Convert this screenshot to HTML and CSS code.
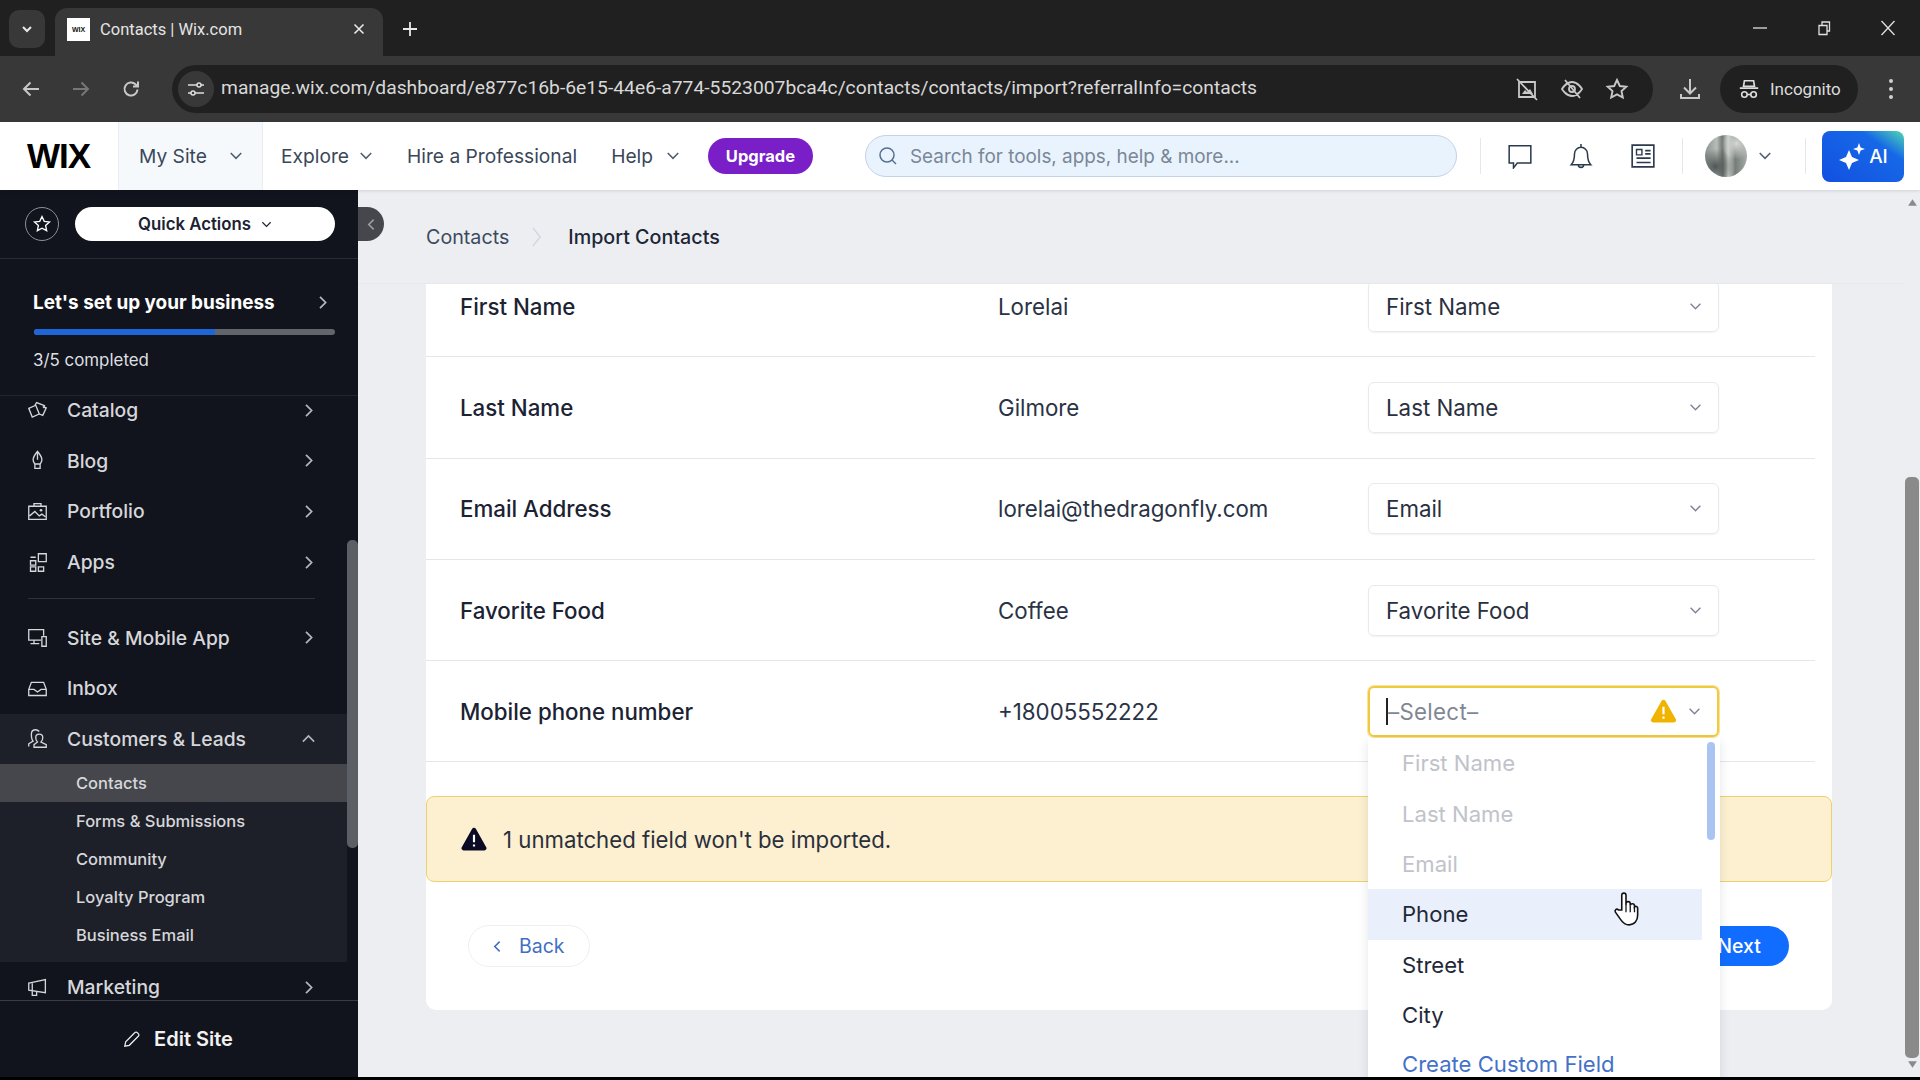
FILE: index.html
```html
<!DOCTYPE html>
<html>
<head>
  <title>Contacts | Wix.com</title>
  <link rel="stylesheet" href="styles.css">
</head>
<body>
  <svg class="defs" width="0" height="0">
    <symbol id="chev-down" viewBox="0 0 12 12"><path d="M1.5 3.5 6 8l4.500-4.500" fill="none" stroke="currentColor" stroke-width="1.300"/></symbol>
    <symbol id="chev-right" viewBox="0 0 12 12"><path d="M4 1.500 8.500 6 4 10.500" fill="none" stroke="currentColor" stroke-width="1.400"/></symbol>
    <symbol id="warn" viewBox="0 0 24 22"><path d="M10.300 1.600a2 2 0 0 1 3.400 0l9.600 16.900a2 2 0 0 1-1.700 3H2.400a2 2 0 0 1-1.700-3z" fill="currentColor"/><path d="M11 7h2v7h-2zM11 16h2v2h-2z" fill="#fff"/></symbol>
  </svg>

  <div class="app">
    <!-- browser chrome -->
    <div class="tabstrip">
      <div class="tab-search"><svg class="ic12" viewBox="0 0 12 12"><path d="M2 4l4 4 4-4" fill="none" stroke="#e8e8e8" stroke-width="2"/></svg></div>
      <div class="tab">
        <span class="favicon">WIX</span>
        <span class="tab-title">Contacts | Wix.com</span>
        <svg class="tab-close" viewBox="0 0 12 12"><path d="M1.500 1.500l9 9M10.500 1.500l-9 9" stroke="#e8e8e8" stroke-width="1.600"/></svg>
      </div>
      <svg class="tab-new" viewBox="0 0 14 14"><path d="M7 0v14M0 7h14" stroke="#e8e8e8" stroke-width="1.800"/></svg>
      <div class="win-controls">
        <svg viewBox="0 0 16 16"><path d="M1 8h14" stroke="#e0e0e0" stroke-width="1.300"/></svg>
        <svg viewBox="0 0 16 16"><path d="M3 5.500h8v9H3zM6 5V2h7.500v9H11" fill="none" stroke="#e0e0e0" stroke-width="1.300"/></svg>
        <svg viewBox="0 0 16 16"><path d="M1.500 1l13 14M14.500 1l-13 14" stroke="#e0e0e0" stroke-width="1.300"/></svg>
      </div>
    </div>

    <div class="toolbar">
      <svg class="nav-ic" viewBox="0 0 20 20"><path d="M18 10H3M9.500 3.500 3 10l6.500 6.500" fill="none" stroke="#c8c8c8" stroke-width="2"/></svg>
      <svg class="nav-ic dim" viewBox="0 0 20 20"><path d="M2 10h15M10.500 3.500 17 10l-6.500 6.500" fill="none" stroke="#777" stroke-width="2"/></svg>
      <svg class="nav-ic" viewBox="0 0 20 20"><path d="M16.500 10.500a6.500 6.500 0 1 1-2-5.200L17 7.500M17 2.500v5h-5" fill="none" stroke="#c8c8c8" stroke-width="2"/></svg>
      <div class="omnibox">
        <div class="site-info"><svg viewBox="0 0 20 20"><path d="M2 6h9M15 6h3M2 14h3M9 14h9" stroke="#ddd" stroke-width="1.600"/><circle cx="13" cy="6" r="2" fill="none" stroke="#ddd" stroke-width="1.500"/><circle cx="7" cy="14" r="2" fill="none" stroke="#ddd" stroke-width="1.500"/></svg></div>
        <span class="url">manage.wix.com/dashboard/e877c16b-6e15-44e6-a774-5523007bca4c/contacts/contacts/import?referralInfo=contacts</span>
        <svg class="omni-ic" viewBox="0 0 24 24"><path d="M4 5h16v15H4zM2 2l20 21" fill="none" stroke="#c8c8c8" stroke-width="1.800"/><path d="M7 17l3-4 2 2 3-3 3 5z" fill="#c8c8c8"/></svg>
        <svg class="omni-ic" viewBox="0 0 24 24"><path d="M2 12s4-7 10-7 10 7 10 7-4 7-10 7-10-7-10-7zM5 3l15 18" fill="none" stroke="#c8c8c8" stroke-width="1.800"/><circle cx="12" cy="12" r="3" fill="none" stroke="#c8c8c8" stroke-width="1.800"/></svg>
        <svg class="omni-ic" viewBox="0 0 24 24"><path d="M12 3l2.800 6 6.500.7-4.800 4.400 1.300 6.400L12 17.300 6.200 20.500l1.300-6.400L2.700 9.700 9.200 9z" fill="none" stroke="#c8c8c8" stroke-width="1.900"/></svg>
      </div>
      <svg class="download" viewBox="0 0 24 24"><path d="M12 2v14M6 10.500l6 6 6-6M3 17v4h18v-4" fill="none" stroke="#c8c8c8" stroke-width="2"/></svg>
      <div class="incognito">
        <svg viewBox="0 0 24 24"><path d="M7 3h10l1 6H6zM2 11h20" fill="none" stroke="#ddd" stroke-width="1.800"/><circle cx="7" cy="18" r="3" fill="none" stroke="#ddd" stroke-width="1.800"/><circle cx="17" cy="18" r="3" fill="none" stroke="#ddd" stroke-width="1.800"/><path d="M10 18h4" stroke="#ddd" stroke-width="1.800"/></svg>
        <span>Incognito</span>
      </div>
      <div class="menu-dots"><i></i><i></i><i></i></div>
    </div>

    <!-- wix top bar -->
    <div class="topbar">
      <div class="logo">WIX</div>
      <div class="site-switch">My Site <svg class="chev-sm"><use href="#chev-down"/></svg></div>
      <nav class="topnav">
        <span class="nav-item explore">Explore <svg class="chev-sm"><use href="#chev-down"/></svg></span>
        <span class="nav-item hire">Hire a Professional</span>
        <span class="nav-item help">Help <svg class="chev-sm"><use href="#chev-down"/></svg></span>
      </nav>
      <button class="upgrade">Upgrade</button>
      <div class="search">
        <svg viewBox="0 0 20 20"><circle cx="9" cy="9" r="7" fill="none" stroke="#56708f" stroke-width="1.500"/><path d="M14 14l4 4" stroke="#56708f" stroke-width="1.500"/></svg>
        <span>Search for tools, apps, help &amp; more...</span>
      </div>
      <div class="top-icons">
        <svg viewBox="0 0 24 24"><path d="M2 2.500h20v16H9.500L6 23v-4.500H2z" fill="none" stroke="#2b3a4d" stroke-width="1.400"/></svg>
        <svg viewBox="0 0 24 24"><path d="M12 1v2.500M6 10a6 6 0 0 1 12 0c0 6 1 8 3 10H3c2-2 3-4 3-10zM9.500 20a2.500 2.500 0 0 0 5 0" fill="none" stroke="#2b3a4d" stroke-width="1.400"/></svg>
        <svg viewBox="0 0 24 24"><path d="M2 2h20v20H2z" fill="none" stroke="#2b3a4d" stroke-width="1.500"/><path d="M6 6h5v5H6z" fill="none" stroke="#2b3a4d" stroke-width="1.300"/><path d="M14 7h5M14 10h5M6 14h13M6 18h13" stroke="#2b3a4d" stroke-width="1.500"/></svg>
      </div>
      <div class="account">
        <div class="avatar"></div>
        <svg class="chev-sm"><use href="#chev-down"/></svg>
      </div>
      <button class="ai-btn">
        <svg viewBox="0 0 28 28"><path d="M11 8l3 7 7 3-7 3-3 7-3-7-7-3 7-3z" fill="#fff"/><path d="M21 1l1.600 4.400L27 7l-4.400 1.600L21 13l-1.600-4.400L15 7l4.400-1.600z" fill="#fff"/></svg>
        <span>AI</span>
      </button>
    </div>

    <div class="main">
      <!-- sidebar -->
      <aside class="sidebar">
        <div class="side-top">
          <div class="star-btn"><svg viewBox="0 0 24 24"><path d="M12 3l2.700 5.800 6.300.7-4.700 4.300 1.300 6.200L12 17l-5.600 3 1.300-6.200L3 9.500l6.300-.7z" fill="none" stroke="#fff" stroke-width="1.600"/></svg></div>
          <button class="quick">Quick Actions <svg class="chev-xs"><use href="#chev-down"/></svg></button>
        </div>
        <div class="setup">
          <div class="setup-title"><span>Let's set up your business</span><svg class="chev-r"><use href="#chev-right"/></svg></div>
          <div class="progress"><div class="progress-fill" style="width: 60%"></div></div>
          <div class="setup-count">3/5 completed</div>
        </div>
        <div class="side-menu">
          <div class="menu-item first">
            <svg class="menu-ic" viewBox="0 0 24 24"><path d="M2 9.500 10 6l4 10-8 3.500z" fill="none" stroke="currentColor" stroke-width="1.500"/><path d="M9 6 11 3l9 3.500-1 3M14 16l4 1.500 4-8.500-4-1.500" fill="none" stroke="currentColor" stroke-width="1.500"/></svg>
            <span>Catalog</span><svg class="chev-r"><use href="#chev-right"/></svg>
          </div>
          <div class="menu-item">
            <svg class="menu-ic" viewBox="0 0 24 24"><path d="M12 1.500c-3 4-5 6-5 9.500 0 2.500 1.500 4 2 5h6c.5-1 2-2.500 2-5 0-3.500-2-5.500-5-9.500zM12 2v9M9 16h6v5H9z" fill="none" stroke="currentColor" stroke-width="1.500"/></svg>
            <span>Blog</span><svg class="chev-r"><use href="#chev-right"/></svg>
          </div>
          <div class="menu-item">
            <svg class="menu-ic" viewBox="0 0 24 24"><path d="M2 6h20v15H2zM8 6V3h8v3M3 17l6-5 5 5 3-2 4 3" fill="none" stroke="currentColor" stroke-width="1.500"/><circle cx="16" cy="10.500" r="1.500" fill="currentColor"/></svg>
            <span>Portfolio</span><svg class="chev-r"><use href="#chev-right"/></svg>
          </div>
          <div class="menu-item">
            <svg class="menu-ic" viewBox="0 0 24 24"><path d="M4 10h6v5H4zM4 17h6v5H4zM13 17h6v5h-6zM13 2h9v9h-9zM4 6h6" fill="none" stroke="currentColor" stroke-width="1.500"/></svg>
            <span>Apps</span><svg class="chev-r"><use href="#chev-right"/></svg>
          </div>
          <div class="menu-divider"></div>
          <div class="menu-item">
            <svg class="menu-ic" viewBox="0 0 24 24"><path d="M16 15H2V3h17v7M8 15v4M4 19h10M17 11h5v11h-5z" fill="none" stroke="currentColor" stroke-width="1.500"/></svg>
            <span>Site &amp; Mobile App</span><svg class="chev-r"><use href="#chev-right"/></svg>
          </div>
          <div class="menu-item">
            <svg class="menu-ic" viewBox="0 0 24 24"><path d="M2 13l3-8h14l3 8v7H2zM2 13h6l4 3 4-3h6" fill="none" stroke="currentColor" stroke-width="1.500"/></svg>
            <span>Inbox</span>
          </div>
          <div class="menu-group">
            <div class="menu-item">
              <svg class="menu-ic" viewBox="0 0 24 24"><path d="M2 21v-3l5-3c-2-2-2-5-2-8 0-3 2-5 5-5 2 0 3 1 4 2M22 22H8v-3l4-3c-1.500-1.500-2-3-2-5 0-2 1.500-4 4-4s4 2 4 4c0 2-.5 3.500-2 5l6 3z" fill="none" stroke="currentColor" stroke-width="1.500"/></svg>
              <span>Customers &amp; Leads</span><svg class="chev-r up"><use href="#chev-down"/></svg>
            </div>
            <div class="sub-item selected">Contacts</div>
            <div class="sub-item">Forms &amp; Submissions</div>
            <div class="sub-item">Community</div>
            <div class="sub-item">Loyalty Program</div>
            <div class="sub-item">Business Email</div>
          </div>
          <div class="menu-item">
            <svg class="menu-ic" viewBox="0 0 24 24"><path d="M2 7l19-4v15L2 15zM6 15.500V21h5v-4" fill="none" stroke="currentColor" stroke-width="1.500"/><path d="M6 7v8" stroke="currentColor" stroke-width="1.500"/></svg>
            <span>Marketing</span><svg class="chev-r"><use href="#chev-right"/></svg>
          </div>
        </div>
        <div class="side-foot">
          <svg viewBox="0 0 20 20"><path d="M2 18l1-5L13 3a2 2 0 0 1 3 0l1 1a2 2 0 0 1 0 3L7 17z" fill="none" stroke="#eee" stroke-width="1.400"/></svg>
          <span>Edit Site</span>
        </div>
        <div class="side-thumb"></div>
        <div class="collapse"><svg class="chev-l" viewBox="0 0 12 12"><path d="M8 1.500 3.500 6 8 10.500" fill="none" stroke="#9b9da3" stroke-width="1.500"/></svg></div>
      </aside>

      <!-- page -->
      <section class="content">
        <div class="page">
          <div class="crumbs">
            <span>Contacts</span>
            <svg viewBox="0 0 12 24"><path d="M2 2l8 10-8 10" fill="none" stroke="#d2d5dc" stroke-width="1.500"/></svg>
            <span class="crumb-now">Import Contacts</span>
          </div>
          <div class="page-body">
            <div class="card">
              <div class="rows">
                <div class="row">
                  <span class="row-label">First Name</span><span class="row-value">Lorelai</span>
                  <div class="select">First Name <svg class="chev-sel"><use href="#chev-down"/></svg></div>
                </div>
                <div class="row">
                  <span class="row-label">Last Name</span><span class="row-value">Gilmore</span>
                  <div class="select">Last Name <svg class="chev-sel"><use href="#chev-down"/></svg></div>
                </div>
                <div class="row">
                  <span class="row-label">Email Address</span><span class="row-value">lorelai@thedragonfly.com</span>
                  <div class="select">Email <svg class="chev-sel"><use href="#chev-down"/></svg></div>
                </div>
                <div class="row">
                  <span class="row-label">Favorite Food</span><span class="row-value">Coffee</span>
                  <div class="select">Favorite Food <svg class="chev-sel"><use href="#chev-down"/></svg></div>
                </div>
                <div class="row">
                  <span class="row-label">Mobile phone number</span><span class="row-value">+18005552222</span>
                  <div class="select warning">
                    <span class="caret"></span><span class="placeholder">–Select–</span>
                    <svg class="warn-ic"><use href="#warn"/></svg>
                    <svg class="chev-sel"><use href="#chev-down"/></svg>
                  </div>
                </div>
              </div>
              <div class="banner">
                <svg class="banner-ic"><use href="#warn"/></svg>
                <span>1 unmatched field won't be imported.</span>
              </div>
              <div class="card-foot">
                <button class="btn-back"><svg class="chev-l" viewBox="0 0 12 12"><path d="M8 1.500 3.500 6 8 10.500" fill="none" stroke="#3f6fc4" stroke-width="1.400"/></svg>Back</button>
                <button class="btn-next">Next</button>
              </div>
            </div>
          </div>

          <div class="dropdown">
            <div class="opt disabled">First Name</div>
            <div class="opt disabled">Last Name</div>
            <div class="opt disabled">Email</div>
            <div class="opt hover">Phone</div>
            <div class="opt">Street</div>
            <div class="opt">City</div>
            <div class="opt link">Create Custom Field</div>
            <div class="dd-thumb"></div>
          </div>
          <svg class="hand" viewBox="0 0 24 34"><path d="M8 18V4a2 2 0 0 1 4 0v10-2a2 2 0 0 1 4 0v2a2 2 0 0 1 4 0v1a1.800 1.800 0 0 1 3 1v7c0 5-3 9-8 9-4 0-6-2-8-5l-5-7c-1-2 1-4 3-2z" fill="#fff" stroke="#111" stroke-width="1.500"/><path d="M12 14v6M16 14v6M20 15v5" stroke="#111" stroke-width="1.200"/></svg>
        </div>
        <div class="page-scroll">
          <svg viewBox="0 0 10 8"><path d="M5 1l4 6H1z" fill="#8a8a8a"/></svg>
          <div class="page-track"><div class="page-thumb"></div></div>
          <svg viewBox="0 0 10 8"><path d="M5 7 1 1h8z" fill="#8a8a8a"/></svg>
        </div>
      </section>
    </div>
  </div>
</body>
</html>
```

FILE: styles.css
```css
/* page frame */
html, body {
  margin: 0;
  height: 100%;
  background-color: #000;
  overflow: hidden;
}

body {
  font-family: "Inter", "Liberation Sans", sans-serif;
  color: #162032;
}

.defs {
  position: absolute;
}

.app {
  width: 1920px;
  height: 1077px;
  display: flex;
  flex-direction: column;
  overflow: hidden;
}

button {
  font-family: inherit;
  border: none;
}

.chev-sm {
  width: 14px;
  height: 14px;
  color: #4f5d72;
  flex-shrink: 0;
}

.chev-xs {
  width: 11px;
  height: 11px;
  margin-left: 10px;
}

.chev-sel {
  width: 13px;
  height: 13px;
  color: #7d8494;
  flex-shrink: 0;
}

/* browser tabs */
.tabstrip {
  height: 56px;
  flex-shrink: 0;
  background-color: #202020;
  display: flex;
  align-items: flex-end;
  font-family: "Roboto", sans-serif;
  color: #e4e4e4;
}

.tab-search {
  width: 36px;
  height: 38px;
  margin: 0 10px 8px 9px;
  border-radius: 10px;
  background-color: #383838;
  display: flex;
  align-items: center;
  justify-content: center;
}

.ic12 {
  width: 12px;
  height: 12px;
}

.tab {
  width: 328px;
  height: 48px;
  box-sizing: border-box;
  padding: 0 18px 6px 12px;
  background-color: #383838;
  border-radius: 12px 12px 0 0;
  display: flex;
  align-items: center;
}

.favicon {
  width: 23px;
  height: 23px;
  background-color: #fff;
  color: #111;
  font: bold 7px "Liberation Sans", sans-serif;
  display: flex;
  align-items: center;
  justify-content: center;
  margin-right: 10px;
}

.tab-title {
  flex: 1;
  font-size: 16.500px;
}

.tab-close {
  width: 12px;
  height: 12px;
}

.tab-new {
  width: 14px;
  height: 14px;
  margin: 0 0 20px 20px;
}

.win-controls {
  margin-left: auto;
  padding-right: 24px;
  height: 56px;
  display: flex;
  align-items: center;
  gap: 48px;
}

.win-controls svg {
  width: 16px;
  height: 16px;
}

/* browser toolbar */
.toolbar {
  height: 66px;
  flex-shrink: 0;
  box-sizing: border-box;
  padding: 0 0 0 21px;
  background-color: #383838;
  display: flex;
  align-items: center;
  font-family: "Roboto", sans-serif;
}

.nav-ic {
  width: 20px;
  height: 20px;
  margin-right: 30px;
}

.omnibox {
  width: 1481px;
  height: 48px;
  margin-left: 1px;
  box-sizing: border-box;
  border-radius: 24px;
  background-color: #202020;
  display: flex;
  align-items: center;
  padding: 0 24px 0 6px;
}

.site-info {
  width: 36px;
  height: 36px;
  border-radius: 50%;
  background-color: #383838;
  display: flex;
  align-items: center;
  justify-content: center;
  margin-right: 7px;
}

.site-info svg {
  width: 20px;
  height: 20px;
}

.url {
  flex: 1;
  font-size: 19.270px;
  line-height: 24px;
  margin-top: -2px;
  color: #d8d8d8;
  white-space: nowrap;
}

.omni-ic {
  width: 24px;
  height: 24px;
  margin-left: 21px;
}

.download {
  width: 24px;
  height: 24px;
  margin-left: 25px;
}

.incognito {
  width: 138px;
  height: 48px;
  margin-left: 18px;
  box-sizing: border-box;
  padding-left: 18px;
  border-radius: 24px;
  background-color: #202020;
  display: flex;
  align-items: center;
  gap: 10px;
  font-size: 17px;
  color: #dcdcdc;
}

.incognito svg {
  width: 22px;
  height: 22px;
}

.menu-dots {
  margin-left: 31px;
  display: flex;
  flex-direction: column;
  gap: 4px;
}

.menu-dots i {
  width: 4px;
  height: 4px;
  border-radius: 50%;
  background-color: #d0d0d0;
}

/* wix top bar */
.topbar {
  height: 68px;
  flex-shrink: 0;
  background-color: #fff;
  display: flex;
  align-items: center;
  font-size: 19.200px;
  color: #3a4759;
  box-shadow: 0 1px 3px rgba(0, 0, 0, 0.12);
  position: relative;
  z-index: 3;
}

.logo {
  width: 118px;
  box-sizing: border-box;
  padding-left: 27px;
  font: bold 35px "Liberation Sans", sans-serif;
  letter-spacing: -1px;
  color: #000;
}

.site-switch {
  width: 145px;
  height: 68px;
  box-sizing: border-box;
  padding: 0 19px 0 20px;
  background-color: #f6f9fc;
  border-left: 1px solid #e8edf3;
  border-right: 1px solid #e8edf3;
  display: flex;
  align-items: center;
  justify-content: space-between;
}

.topnav {
  display: flex;
  align-items: center;
}

.nav-item {
  display: flex;
  align-items: center;
  gap: 10px;
}

.explore {
  margin-left: 18px;
}

.hire {
  margin-left: 34px;
}

.help {
  margin-left: 34px;
  gap: 13px;
}

.upgrade {
  width: 105px;
  height: 36px;
  margin-left: 28px;
  border-radius: 18px;
  background-color: #7a1ec8;
  color: #fff;
  font-size: 16.500px;
  font-weight: 700;
}

.search {
  width: 592px;
  height: 42px;
  margin-left: 52px;
  box-sizing: border-box;
  padding-left: 12px;
  border: 1px solid #c5d3e6;
  border-radius: 21px;
  background-color: #e8f3fd;
  color: #7a8797;
  font-size: 18.900px;
  display: flex;
  align-items: center;
  gap: 12px;
}

.search svg {
  width: 20px;
  height: 20px;
}

.top-icons {
  width: 203px;
  height: 36px;
  margin-left: 23px;
  box-sizing: border-box;
  padding: 0 26px;
  border-left: 1px solid #e4e7ec;
  border-right: 1px solid #e4e7ec;
  display: flex;
  align-items: center;
  justify-content: space-between;
}

.top-icons svg {
  width: 26px;
  height: 26px;
}

.account {
  width: 123px;
  height: 36px;
  box-sizing: border-box;
  padding-left: 22px;
  border-right: 1px solid #e4e7ec;
  display: flex;
  align-items: center;
  gap: 11px;
}

.avatar {
  width: 42px;
  height: 42px;
  flex-shrink: 0;
  border-radius: 50%;
  background:
    radial-gradient(circle at 25% 75%, #4e5654 0, transparent 40%),
    radial-gradient(circle at 75% 20%, #d5d8d4 0, transparent 35%),
    linear-gradient(90deg, #8b938f 0%, #b7bdb8 28%, #6c726d 42%, #c9cdc8 55%, #767d79 72%, #a7ada9 100%);
}

.ai-btn {
  width: 82px;
  height: 51px;
  margin-left: 16px;
  border-radius: 8px;
  background: linear-gradient(215deg, #4fd8b0 0%, #1668e8 28%, #1250e0 100%);
  color: #fff;
  font-size: 19px;
  font-weight: 500;
  display: flex;
  align-items: center;
  justify-content: center;
  gap: 3px;
  padding: 0;
}

.ai-btn svg {
  width: 28px;
  height: 28px;
}

/* main area */
.main {
  flex: 1;
  display: flex;
  min-height: 0;
}

/* sidebar */
.sidebar {
  width: 358px;
  flex-shrink: 0;
  background-color: #12141d;
  color: #d6d7db;
  display: flex;
  flex-direction: column;
  position: relative;
}

.side-top {
  height: 69px;
  flex-shrink: 0;
  box-sizing: border-box;
  padding: 17px 23px 0 25px;
  border-bottom: 1px solid #2a2c35;
  display: flex;
  align-items: flex-start;
  gap: 16px;
}

.star-btn {
  width: 34px;
  height: 34px;
  box-sizing: border-box;
  border: 1px solid #8d8f96;
  border-radius: 50%;
  display: flex;
  align-items: center;
  justify-content: center;
}

.star-btn svg {
  width: 20px;
  height: 20px;
}

.quick {
  flex: 1;
  height: 34px;
  border-radius: 17px;
  background-color: #fff;
  color: #1a2233;
  font-size: 16.800px;
  font-weight: 600;
  display: flex;
  align-items: center;
  justify-content: center;
}

.setup {
  height: 137px;
  flex-shrink: 0;
  box-sizing: border-box;
  padding: 30px 28px 0 33px;
  border-bottom: 1px solid #23252e;
}

.setup-title {
  display: flex;
  align-items: center;
  justify-content: space-between;
  font-size: 18.900px;
  font-weight: 700;
  color: #fff;
  height: 26px;
}

.chev-r {
  width: 15px;
  height: 15px;
  color: #b5b6ba;
  flex-shrink: 0;
}

.progress {
  height: 6px;
  margin: 14px -5px 0 1px;
  border-radius: 3px;
  background-color: #63656c;
  overflow: hidden;
}

.progress-fill {
  height: 100%;
  background-color: #1e66d8;
}

.setup-count {
  margin-top: 15px;
  font-size: 16.900px;
  color: #dfdfe1;
}

.side-menu {
  flex: 1;
  min-height: 0;
  margin-right: 11px;
  overflow: hidden;
}

.menu-item {
  height: 50.600px;
  box-sizing: border-box;
  padding: 0 31px 0 27px;
  display: flex;
  align-items: center;
  font-size: 19.300px;
  font-weight: 500;
}

.menu-item.first {
  margin-top: -11px;
}

.menu-item span {
  flex: 1;
}

.menu-ic {
  width: 21px;
  height: 21px;
  margin-right: 19px;
  flex-shrink: 0;
}

.up {
  transform: rotate(180deg);
}

.menu-divider {
  height: 1px;
  margin: 11px 32px 13px 28px;
  background-color: #2f313a;
}

.menu-group {
  background-color: #1e2029;
  padding-bottom: 8px;
}

.sub-item {
  height: 38px;
  box-sizing: border-box;
  padding-left: 76px;
  display: flex;
  align-items: center;
  font-size: 16.500px;
  font-weight: 500;
}

.sub-item.selected {
  background-color: #45474d;
}

.side-foot {
  height: 77px;
  flex-shrink: 0;
  box-sizing: border-box;
  border-top: 1px solid #3a3c45;
  background-color: #12141d;
  display: flex;
  align-items: center;
  justify-content: center;
  gap: 13px;
  padding-right: 2px;
  font-size: 20px;
  font-weight: 600;
  color: #f2f2f3;
  position: relative;
}

.side-foot svg {
  width: 18px;
  height: 18px;
}

.side-thumb {
  position: absolute;
  left: 347px;
  top: 350px;
  width: 11px;
  height: 308px;
  border-radius: 5px;
  background-color: #5d5f66;
}

.collapse {
  position: absolute;
  left: 358px;
  top: 17px;
  width: 26px;
  height: 34px;
  border-radius: 0 17px 17px 0;
  background-color: #45474d;
  display: flex;
  align-items: center;
  justify-content: center;
}

.chev-l {
  width: 13px;
  height: 13px;
}

/* content */
.content {
  flex: 1;
  min-width: 0;
  display: flex;
  background-color: #eceef2;
}

.page {
  flex: 1;
  min-width: 0;
  display: flex;
  flex-direction: column;
  position: relative;
}

.crumbs {
  height: 94px;
  flex-shrink: 0;
  box-sizing: border-box;
  padding: 0 0 0 68px;
  border-bottom: 1px solid #e6e8ec;
  display: flex;
  align-items: center;
  gap: 22px;
  font-size: 19.700px;
  color: #3c4a5e;
}

.crumbs svg {
  width: 11px;
  height: 24px;
}

.crumb-now {
  margin-left: 4px;
  color: #1c2636;
  font-weight: 500;
}

.page-body {
  flex: 1;
  min-height: 0;
  padding: 0 72px 0 68px;
}

.card {
  height: 726px;
  background-color: #fff;
  border-radius: 0 0 10px 10px;
  overflow: hidden;
}

.rows {
  margin: -28px 17px 0 0;
}

.row {
  height: 101.300px;
  box-sizing: border-box;
  padding-left: 34px;
  border-bottom: 1px solid #e4e6ea;
  display: grid;
  grid-template-columns: 538px 370px 351px;
  align-items: center;
  font-size: 22.300px;
}

.row-label {
  font-weight: 500;
  color: #1b2233;
}

.row-value {
  color: #2a3345;
}

.select {
  height: 51px;
  box-sizing: border-box;
  padding: 0 16px 0 17px;
  border: 1px solid #e6e9ee;
  border-radius: 6px;
  box-shadow: 0 1px 2px rgba(22, 45, 61, 0.06);
  display: flex;
  align-items: center;
  justify-content: space-between;
  color: #2a3040;
}

.select.warning {
  border: 2px solid #f0c93e;
  box-shadow: 0 0 0 1px #f8e49a;
  justify-content: flex-start;
  padding-left: 16px;
}

.caret {
  width: 2px;
  height: 27px;
  background-color: #222;
}

.placeholder {
  flex: 1;
  color: #7f8794;
  letter-spacing: 0.300px;
}

.warn-ic {
  width: 27px;
  height: 24px;
  color: #f0b400;
  margin-right: 11px;
}

.banner {
  height: 86px;
  margin-top: 34px;
  box-sizing: border-box;
  padding-left: 34px;
  background-color: #fdf0d0;
  border: 1px solid #ecd26e;
  border-radius: 8px;
  display: flex;
  align-items: center;
  gap: 16px;
  font-size: 22.200px;
  color: #2a2f3c;
}

.banner-ic {
  width: 26px;
  height: 24px;
  color: #0b0b26;
}

.card-foot {
  height: 127px;
  box-sizing: border-box;
  padding: 43px 43px 0 42px;
  display: flex;
  justify-content: space-between;
  align-items: flex-start;
}

.btn-back {
  width: 122px;
  height: 42px;
  box-sizing: border-box;
  background-color: #fff;
  border: 1px solid #eceff4;
  border-radius: 21px;
  color: #3f6fc4;
  font-size: 19.500px;
  display: flex;
  align-items: center;
  gap: 15px;
  padding: 0 0 0 22px;
}

.btn-next {
  width: 100px;
  height: 40px;
  margin-top: 1px;
  border-radius: 20px;
  background-color: #116dff;
  color: #fff;
  font-size: 19.500px;
  font-weight: 500;
  padding: 0;
}

/* field menu */
.dropdown {
  position: absolute;
  left: 1010px;
  top: 548px;
  bottom: 0;
  width: 352px;
  background-color: #fff;
  box-shadow: 0 4px 10px rgba(22, 45, 61, 0.12);
  overflow: hidden;
  font-size: 22.100px;
  z-index: 2;
}

.opt {
  height: 50.400px;
  box-sizing: border-box;
  padding-left: 34px;
  width: 334px;
  display: flex;
  align-items: center;
  color: #1f2838;
}

.opt.disabled {
  color: #c0c3c9;
}

.opt.hover {
  background-color: #e9f0fb;
}

.opt.link {
  height: 36px;
  align-items: flex-end;
  line-height: 24px;
  color: #4472c8;
}

.dd-thumb {
  position: absolute;
  left: 339px;
  top: 4px;
  width: 8px;
  height: 98px;
  border-radius: 4px;
  background-color: #aac4f2;
}

.hand {
  position: absolute;
  left: 1255px;
  top: 701px;
  width: 26px;
  height: 36px;
  z-index: 3;
}

/* page scrollbar */
.page-scroll {
  width: 16px;
  flex-shrink: 0;
  display: flex;
  flex-direction: column;
  align-items: center;
  background-color: #eceef2;
  padding: 8px 0 8px;
  box-sizing: border-box;
}

.page-scroll svg {
  width: 11px;
  height: 9px;
}

.page-track {
  flex: 1;
  width: 100%;
  padding-top: 270px;
  box-sizing: border-box;
}

.page-thumb {
  width: 14px;
  height: 581px;
  margin-left: 1px;
  border-radius: 5px;
  background-color: #8a8a8a;
}
```
